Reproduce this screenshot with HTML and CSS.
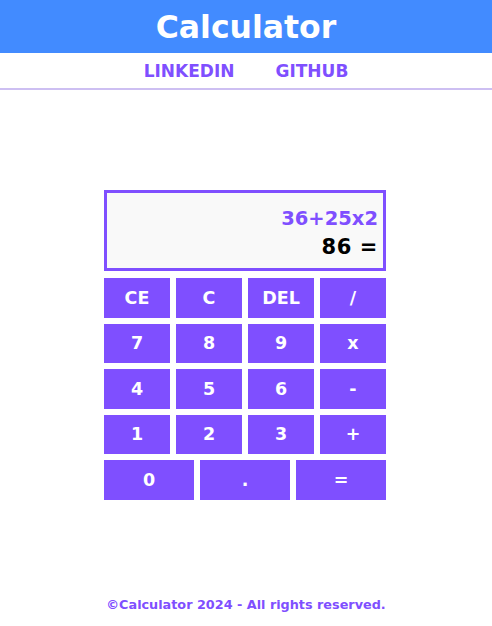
FILE: index.html
```html
<!DOCTYPE html>
<html>
<head>
<meta charset="utf-8">
<link rel="stylesheet" href="styles.css">
</head>
<body>
<div class="page">
  <header class="header"><h1 class="title">Calculator</h1></header>
  <nav class="nav">
    <a class="nav-link" href="#">LINKEDIN</a>
    <a class="nav-link" href="#">GITHUB</a>
  </nav>
  <main class="main">
    <div class="calc">
      <div class="display">
        <div class="expr">36+25x2</div>
        <div class="result">86 =</div>
      </div>
      <div class="keys">
        <button class="key">CE</button>
        <button class="key">C</button>
        <button class="key">DEL</button>
        <button class="key">/</button>
        <button class="key">7</button>
        <button class="key">8</button>
        <button class="key">9</button>
        <button class="key">x</button>
        <button class="key">4</button>
        <button class="key">5</button>
        <button class="key">6</button>
        <button class="key">-</button>
        <button class="key">1</button>
        <button class="key">2</button>
        <button class="key">3</button>
        <button class="key">+</button>
      </div>
      <div class="keys-last">
        <button class="key">0</button>
        <button class="key">.</button>
        <button class="key">=</button>
      </div>
    </div>
  </main>
  <footer class="footer">©Calculator 2024 - All rights reserved.</footer>
</div>
</body>
</html>
```
FILE: styles.css
```css
* { box-sizing: border-box; }
body {
  margin: 0;
  font-family: "DejaVu Sans", Verdana, sans-serif;
  background: #fff;
}
.page {
  display: flex;
  flex-direction: column;
  min-height: 626px;
}
.header {
  background: #428bff;
  height: 53px;
  display: flex;
  align-items: center;
  justify-content: center;
}
.title {
  margin: 0;
  color: #fff;
  font-size: 31.5px;
  font-weight: bold;
}
.nav {
  height: 37px;
  border-bottom: 2px solid #cdbff2;
  display: flex;
  justify-content: center;
  align-items: center;
  gap: 41px;
}
.nav-link {
  color: #7f4fff;
  font-weight: bold;
  font-size: 17px;
  text-decoration: none;
}
.main {
  flex: 1;
  display: flex;
  justify-content: center;
  padding-top: 100px;
  padding-right: 2px;
}
.calc {
  width: 282px;
  display: flex;
  flex-direction: column;
}
.display {
  height: 81px;
  border: 3px solid #7f4fff;
  background: #f9f9f9;
  padding: 14px 5px 0 4px;
  text-align: right;
  font-weight: bold;
}
.expr {
  color: #7f4fff;
  font-size: 19.5px;
  line-height: 24px;
}
.result {
  margin-top: 3px;
  color: #000;
  font-size: 21px;
  letter-spacing: 0.6px;
  line-height: 26px;
}
.keys {
  margin-top: 7px;
  display: grid;
  grid-template-columns: repeat(4, 66px);
  grid-auto-rows: 39.5px;
  column-gap: 6px;
  row-gap: 6px;
}
.keys-last {
  margin-top: 6px;
  display: grid;
  grid-template-columns: repeat(3, 90px);
  grid-auto-rows: 39.5px;
  column-gap: 6px;
}
.key {
  border: none;
  margin: 0;
  padding: 0;
  background: #7f4fff;
  color: #fff;
  font-family: "DejaVu Sans", Verdana, sans-serif;
  font-weight: bold;
  font-size: 17.5px;
}
.footer {
  text-align: center;
  color: #7f4fff;
  font-weight: bold;
  font-size: 12.8px;
  padding-bottom: 14px;
}
```
